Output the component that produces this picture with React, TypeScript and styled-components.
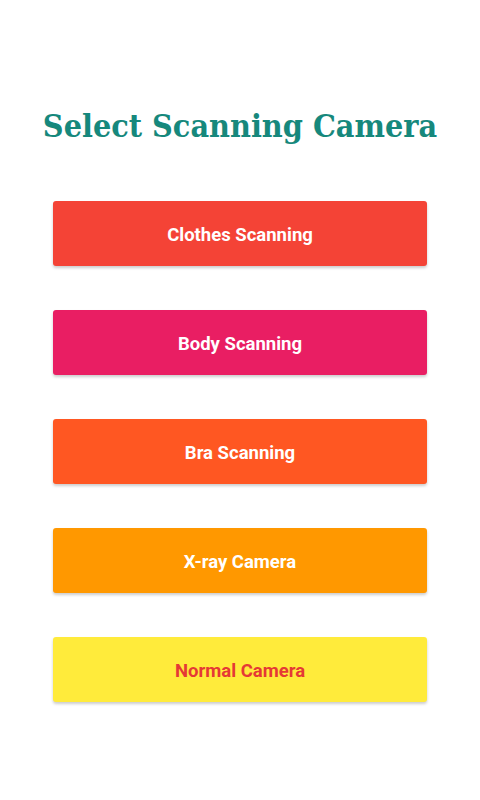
import React from "react";
import styled, { createGlobalStyle } from "styled-components";

const GlobalStyle = createGlobalStyle`
  body {
    margin: 0;
    background: #ffffff;
    font-family: Roboto, "Liberation Sans", sans-serif;
  }
`;

const cameras = [
  { label: "Clothes Scanning", bg: "#f44336", fg: "#ffffff" },
  { label: "Body Scanning", bg: "#e91e63", fg: "#ffffff" },
  { label: "Bra Scanning", bg: "#ff5722", fg: "#ffffff" },
  { label: "X-ray Camera", bg: "#ff9800", fg: "#ffffff" },
  { label: "Normal Camera", bg: "#ffeb3b", fg: "#e53935" },
];

const App = () => {
  return (
    <Screen>
      <GlobalStyle />
      <Title>Select Scanning Camera</Title>
      <ButtonList>
        {cameras.map((c) => (
          <CameraButton key={c.label} $bg={c.bg} $fg={c.fg}>
            {c.label}
          </CameraButton>
        ))}
      </ButtonList>
    </Screen>
  );
};

const Screen = styled.div`
  width: 480px;
  height: 800px;
  display: flex;
  flex-direction: column;
  align-items: center;
  padding-top: 105px;
  box-sizing: border-box;
`;

const Title = styled.h1`
  margin: 0;
  font-family: "DejaVu Serif Condensed", "DejaVu Serif", serif;
  font-stretch: condensed;
  font-weight: bold;
  font-size: 32px;
  line-height: 42px;
  color: #16887c;
`;

const ButtonList = styled.div`
  margin-top: 54px;
  display: flex;
  flex-direction: column;
  gap: 44px;
`;

const CameraButton = styled.button<{ $bg: string; $fg: string }>`
  width: 374px;
  height: 65px;
  padding: 3px 0 0;
  border: none;
  border-radius: 3px;
  background: ${(p) => p.$bg};
  color: ${(p) => p.$fg};
  font-family: Roboto, "Liberation Sans", sans-serif;
  font-weight: bold;
  font-size: 18.5px;
  box-shadow: 0 2px 3px rgba(0, 0, 0, 0.2);
  cursor: pointer;
`;

export default App;
